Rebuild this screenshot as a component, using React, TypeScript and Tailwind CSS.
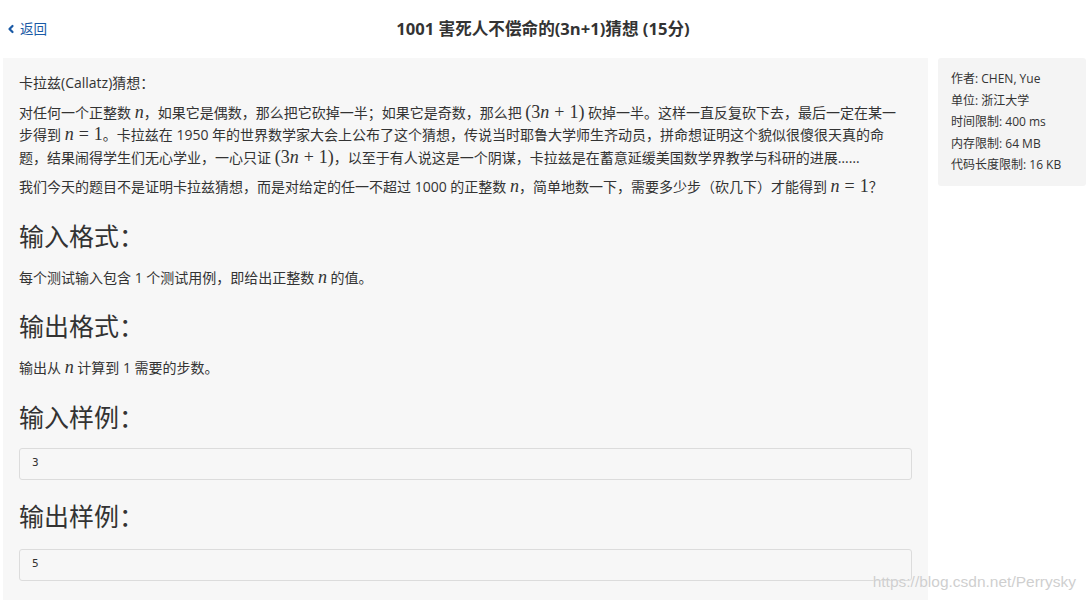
import { ChevronLeft } from 'lucide-react';

const N = () => <span className="font-['Liberation_Serif'] italic text-[18px] leading-[0]">n</span>;

function Eq({ children }: { children: React.ReactNode }) {
  return <span className="font-['Liberation_Serif'] text-[18px] leading-[0] whitespace-nowrap">{children}</span>;
}

const ThreeN = () => (
  <Eq>
    (3<span className="italic">n</span>
    <span className="mx-[5px]">+</span>1)
  </Eq>
);

const NEq1 = () => (
  <Eq>
    <span className="italic">n</span>
    <span className="mx-[5px]">=</span>1
  </Eq>
);

function Heading({ children }: { children: React.ReactNode }) {
  return <h3 className="text-[25px] leading-[36px] mt-[19px] mb-[13px] font-normal">{children}</h3>;
}

function Sample({ value }: { value: string }) {
  return (
    <div className="h-[32px] border border-[#dcdcdc] rounded-[3px] flex items-center pl-[12px] font-['DejaVu_Sans_Mono'] text-[11px]">
      {value}
    </div>
  );
}

export default function App() {
  return (
    <div className="w-[1086px] h-[600px] bg-white relative overflow-hidden text-[#333] font-['Open_Sans','Noto_Sans_CJK_SC',sans-serif]">
      {/* top bar */}
      <div className="h-[58px] grid grid-cols-[1fr_auto_1fr] items-center px-[5px]">
        <a className="flex items-center gap-[3px] text-[13.5px] text-[#1a5aa6] cursor-pointer">
          <ChevronLeft className="w-[12px] h-[12px]" strokeWidth={4.5} />
          返回
        </a>
        <h1 className="text-[16.6px] font-bold">1001 害死人不偿命的(3n+1)猜想 (15分)</h1>
        <div />
      </div>

      <div className="flex gap-[10px] pl-[3px]">
        {/* problem body */}
        <div className="w-[925px] h-[542px] bg-[#f7f7f7] px-[16px] pt-[14px] text-[14px] leading-[22.5px]">
          <p className="mb-[7px] pr-[8px]">卡拉兹(Callatz)猜想：</p>
          <p className="mb-[7px] pr-[8px]">
            对任何一个正整数 <N />，如果它是偶数，那么把它砍掉一半；如果它是奇数，那么把 <ThreeN /> 砍掉一半。这样一直反复砍下去，最后一定在某一步得到 <NEq1 />。卡拉兹在 1950 年的世界数学家大会上公布了这个猜想，传说当时耶鲁大学师生齐动员，拼命想证明这个貌似很傻很天真的命题，结果闹得学生们无心学业，一心只证 <ThreeN />，以至于有人说这是一个阴谋，卡拉兹是在蓄意延缓美国数学界教学与科研的进展……
          </p>
          <p className="pr-[8px]">
            我们今天的题目不是证明卡拉兹猜想，而是对给定的任一不超过 1000 的正整数 <N />，简单地数一下，需要多少步（砍几下）才能得到 <NEq1 />？
          </p>

          <Heading>输入格式：</Heading>
          <p>
            每个测试输入包含 1 个测试用例，即给出正整数 <N /> 的值。
          </p>

          <Heading>输出格式：</Heading>
          <p>
            输出从 <N /> 计算到 1 需要的步数。
          </p>

          <Heading>输入样例：</Heading>
          <Sample value="3" />

          <h3 className="text-[25px] leading-[36px] mt-[18px] mb-[15px] font-normal">输出样例：</h3>
          <Sample value="5" />
        </div>

        {/* limits */}
        <div className="w-[148px] h-[128px] bg-[#f4f4f4] rounded-[3px] px-[13px] py-[10px] text-[12px] leading-[21.5px]">
          <div>作者: CHEN, Yue</div>
          <div>单位: 浙江大学</div>
          <div>时间限制: 400 ms</div>
          <div>内存限制: 64 MB</div>
          <div>代码长度限制: 16 KB</div>
        </div>
      </div>

      <div className="absolute right-[10px] bottom-[7px] font-['Liberation_Sans'] text-[15.5px] text-[#cfcfcf] [text-shadow:0_0_1px_#fff]">
        https://blog.csdn.net/Perrysky
      </div>
    </div>
  );
}
